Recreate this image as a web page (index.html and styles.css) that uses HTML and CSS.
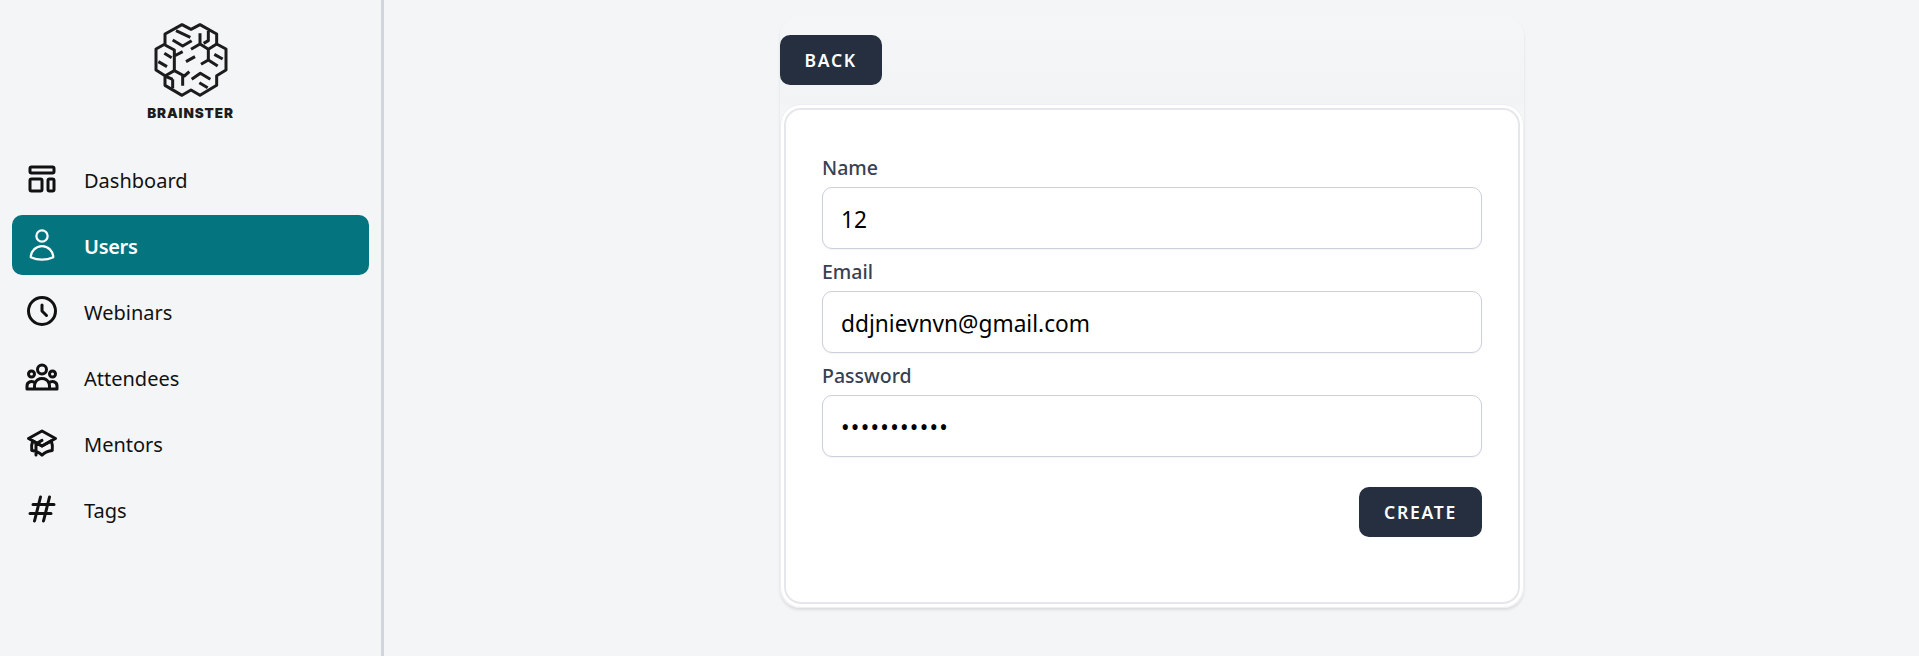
FILE: index.html
```html
<!DOCTYPE html>
<html lang="en">
<head>
<meta charset="utf-8">
<title>Brainster - Create user</title>
<link rel="stylesheet" href="styles.css">
</head>
<body>
<div class="app">
  <aside class="sidebar">
    <div class="brand">
      <svg class="brand-mark" viewBox="0 0 240 240" fill="none" stroke="#1c1c1c" stroke-width="9" stroke-linejoin="round" stroke-linecap="butt">
        <path d="M93 14l27 14 27-14 50 28v30l28 15v63l-28 17v29l-50 30-27-16-27 16-51-30v-29l-27-17V87l27-15V42z"/>
        <path d="M75 32l43 20M65 60l30 18 27-16M147 40v32l-27 16M147 72l25 16M172 32v30l-14 8M197 72l-25 16v32l-22 13M172 120l28 18M190 103l25 14M105 125l27-15"/>
        <path d="M42 75l28 15v45M70 108l25-13M40 100l22 13M22 125l26 15M42 168l28-16v-17M70 152l30 16 15-13M95 165v32M65 178v27M42 168l23 10M122 178l26-18 30 18M145 188l25 15"/>
      </svg>
      <div class="brand-name">BRAINSTER</div>
    </div>
    <nav class="nav">
      <a class="nav-item" href="#">
        <svg class="nav-icon" viewBox="0 0 24 24" fill="none" stroke="currentColor" stroke-width="2" stroke-linecap="round" stroke-linejoin="round"><path d="M4 5a1 1 0 011-1h14a1 1 0 011 1v2a1 1 0 01-1 1H5a1 1 0 01-1-1V5zM4 13a1 1 0 011-1h6a1 1 0 011 1v6a1 1 0 01-1 1H5a1 1 0 01-1-1v-6zM16 13a1 1 0 011-1h2a1 1 0 011 1v6a1 1 0 01-1 1h-2a1 1 0 01-1-1v-6z"/></svg>
        <span class="nav-text">Dashboard</span>
      </a>
      <a class="nav-item is-active" href="#">
        <svg class="nav-icon" viewBox="0 0 24 24" fill="none" stroke="currentColor" stroke-width="1.5" stroke-linecap="round" stroke-linejoin="round"><path d="M15.75 6a3.75 3.75 0 11-7.5 0 3.75 3.75 0 017.5 0zM4.501 20.118a7.5 7.5 0 0114.998 0A17.933 17.933 0 0112 21.75c-2.676 0-5.216-.584-7.499-1.632z"/></svg>
        <span class="nav-text">Users</span>
      </a>
      <a class="nav-item" href="#">
        <svg class="nav-icon" viewBox="0 0 24 24" fill="none" stroke="currentColor" stroke-width="2" stroke-linecap="round" stroke-linejoin="round"><path d="M12 8v4l3 3m6-3a9 9 0 11-18 0 9 9 0 0118 0z"/></svg>
        <span class="nav-text">Webinars</span>
      </a>
      <a class="nav-item" href="#">
        <svg class="nav-icon" viewBox="0 0 24 24" fill="none" stroke="currentColor" stroke-width="2" stroke-linecap="round" stroke-linejoin="round"><path d="M17 20h5v-2a3 3 0 00-5.356-1.857M17 20H7m10 0v-2c0-.656-.126-1.283-.356-1.857M7 20H2v-2a3 3 0 015.356-1.857M7 20v-2c0-.656.126-1.283.356-1.857m0 0a5.002 5.002 0 019.288 0M15 7a3 3 0 11-6 0 3 3 0 016 0zm6 3a2 2 0 11-4 0 2 2 0 014 0zM7 10a2 2 0 11-4 0 2 2 0 014 0z"/></svg>
        <span class="nav-text">Attendees</span>
      </a>
      <a class="nav-item" href="#">
        <svg class="nav-icon" viewBox="0 0 24 24" fill="none" stroke="currentColor" stroke-width="2" stroke-linecap="round" stroke-linejoin="round"><path d="M12 14l9-5-9-5-9 5 9 5z"/><path d="M12 14l6.16-3.422a12.083 12.083 0 01.665 6.479A11.952 11.952 0 0012 20.055a11.952 11.952 0 00-6.824-2.998 12.078 12.078 0 01.665-6.479L12 14zm-4 6v-7.5l4-2.222"/></svg>
        <span class="nav-text">Mentors</span>
      </a>
      <a class="nav-item" href="#">
        <svg class="nav-icon" viewBox="0 0 24 24" fill="none" stroke="currentColor" stroke-width="2" stroke-linecap="round" stroke-linejoin="round"><path d="M7 20l4-16m2 16l4-16M6 9h14M4 15h14"/></svg>
        <span class="nav-text">Tags</span>
      </a>
    </nav>
  </aside>
  <main class="main">
    <div class="panel">
      <div class="toolbar">
        <a class="btn" href="#">BACK</a>
      </div>
      <div class="card">
        <form class="card-inner">
          <div class="field">
            <label class="label" for="name">Name</label>
            <input class="input" id="name" type="text" value="12">
          </div>
          <div class="field">
            <label class="label" for="email">Email</label>
            <input class="input" id="email" type="email" value="ddjnievnvn@gmail.com">
          </div>
          <div class="field">
            <label class="label" for="password">Password</label>
            <input class="input input-secret" id="password" type="password" value="12345678901">
          </div>
          <div class="actions">
            <button class="btn" type="button">CREATE</button>
          </div>
        </form>
      </div>
    </div>
  </main>
</div>
</body>
</html>
```
FILE: styles.css
```css
* { box-sizing: border-box; }
html, body { margin: 0; height: 100%; }
body {
  background: #f4f5f7;
  color: #111;
  font-family: "Noto Sans", "Open Sans", sans-serif;
  overflow: hidden;
}
.app { display: flex; height: 656px; }
.sidebar {
  flex: 0 0 384px;
  border-right: 3px solid #d2d6dc;
  padding: 20px 12px 0 12px;
}
.brand { display: flex; flex-direction: column; align-items: center; height: 129px; }
.brand-mark { width: 80px; height: 80px; display: block; flex: none; }
.brand-name {
  margin-top: 5px;
  font-family: Inter, "Liberation Sans", sans-serif;
  font-weight: 900;
  font-size: 13.5px;
  line-height: 16px;
  letter-spacing: 0.9px;
  color: #1c1c1c;
}
.nav { display: flex; flex-direction: column; gap: 6px; width: 357px; }
.nav-item {
  display: flex;
  align-items: center;
  gap: 24px;
  height: 60px;
  padding-left: 12px;
  border-radius: 10px;
  color: #111;
  font-size: 20px;
  text-decoration: none;
}
.nav-text { margin-top: 2px; }
.nav-item.is-active { background: #04747f; color: #fff; font-weight: 600; letter-spacing: -0.3px; }
.nav-icon { width: 36px; height: 36px; flex: none; }
.main { flex: 1; display: flex; justify-content: center; padding-top: 16px; }
.panel {
  width: 744px;
  height: 592px;
  border-radius: 20px;
  background: #f4f5f7;
  box-shadow: 0 2px 3px rgba(0,0,0,.1);
}
.toolbar {
  padding: 19px 0 20px;
  border-radius: 20px 20px 0 0;
  background: linear-gradient(#f5f6f8, #f2f3f5);
}
.btn {
  display: inline-flex;
  align-items: center;
  justify-content: center;
  height: 50px;
  padding: 0 25px;
  border: 0;
  border-radius: 10px;
  background: #252f3f;
  color: #fff;
  font-family: "Noto Sans", "Open Sans", sans-serif;
  font-size: 17.5px;
  font-weight: 600;
  letter-spacing: 1.75px;
  text-decoration: none;
}
.card {
  margin: 0 1px;
  background: #fff;
  border-radius: 20px;
  padding: 3px;
  box-shadow: 0 0 0 1px #eceef1;
}
.card-inner {
  height: 496px;
  border: 2px solid #e5e7eb;
  border-radius: 17px;
  padding: 35px 35.5px 0 36.5px;
}
.field { display: block; }
.label {
  display: block;
  height: 42px;
  padding-top: 10px;
  line-height: 26px;
  font-size: 19.5px;
  color: #374151;
  font-weight: 500;
}
.input {
  display: block;
  width: 100%;
  height: 62px;
  padding: 2px 18px 0;
  border: 1px solid #cdd0da;
  border-radius: 10px;
  background: #fff;
  color: #000;
  font-family: "Noto Sans", "Open Sans", sans-serif;
  font-size: 22.7px;
  box-shadow: 0 1px 2px rgba(0,0,0,.05);
  outline: 0;
}
.input-secret { letter-spacing: 1.3px; }
.actions { display: flex; justify-content: flex-end; margin-top: 30px; }
```
